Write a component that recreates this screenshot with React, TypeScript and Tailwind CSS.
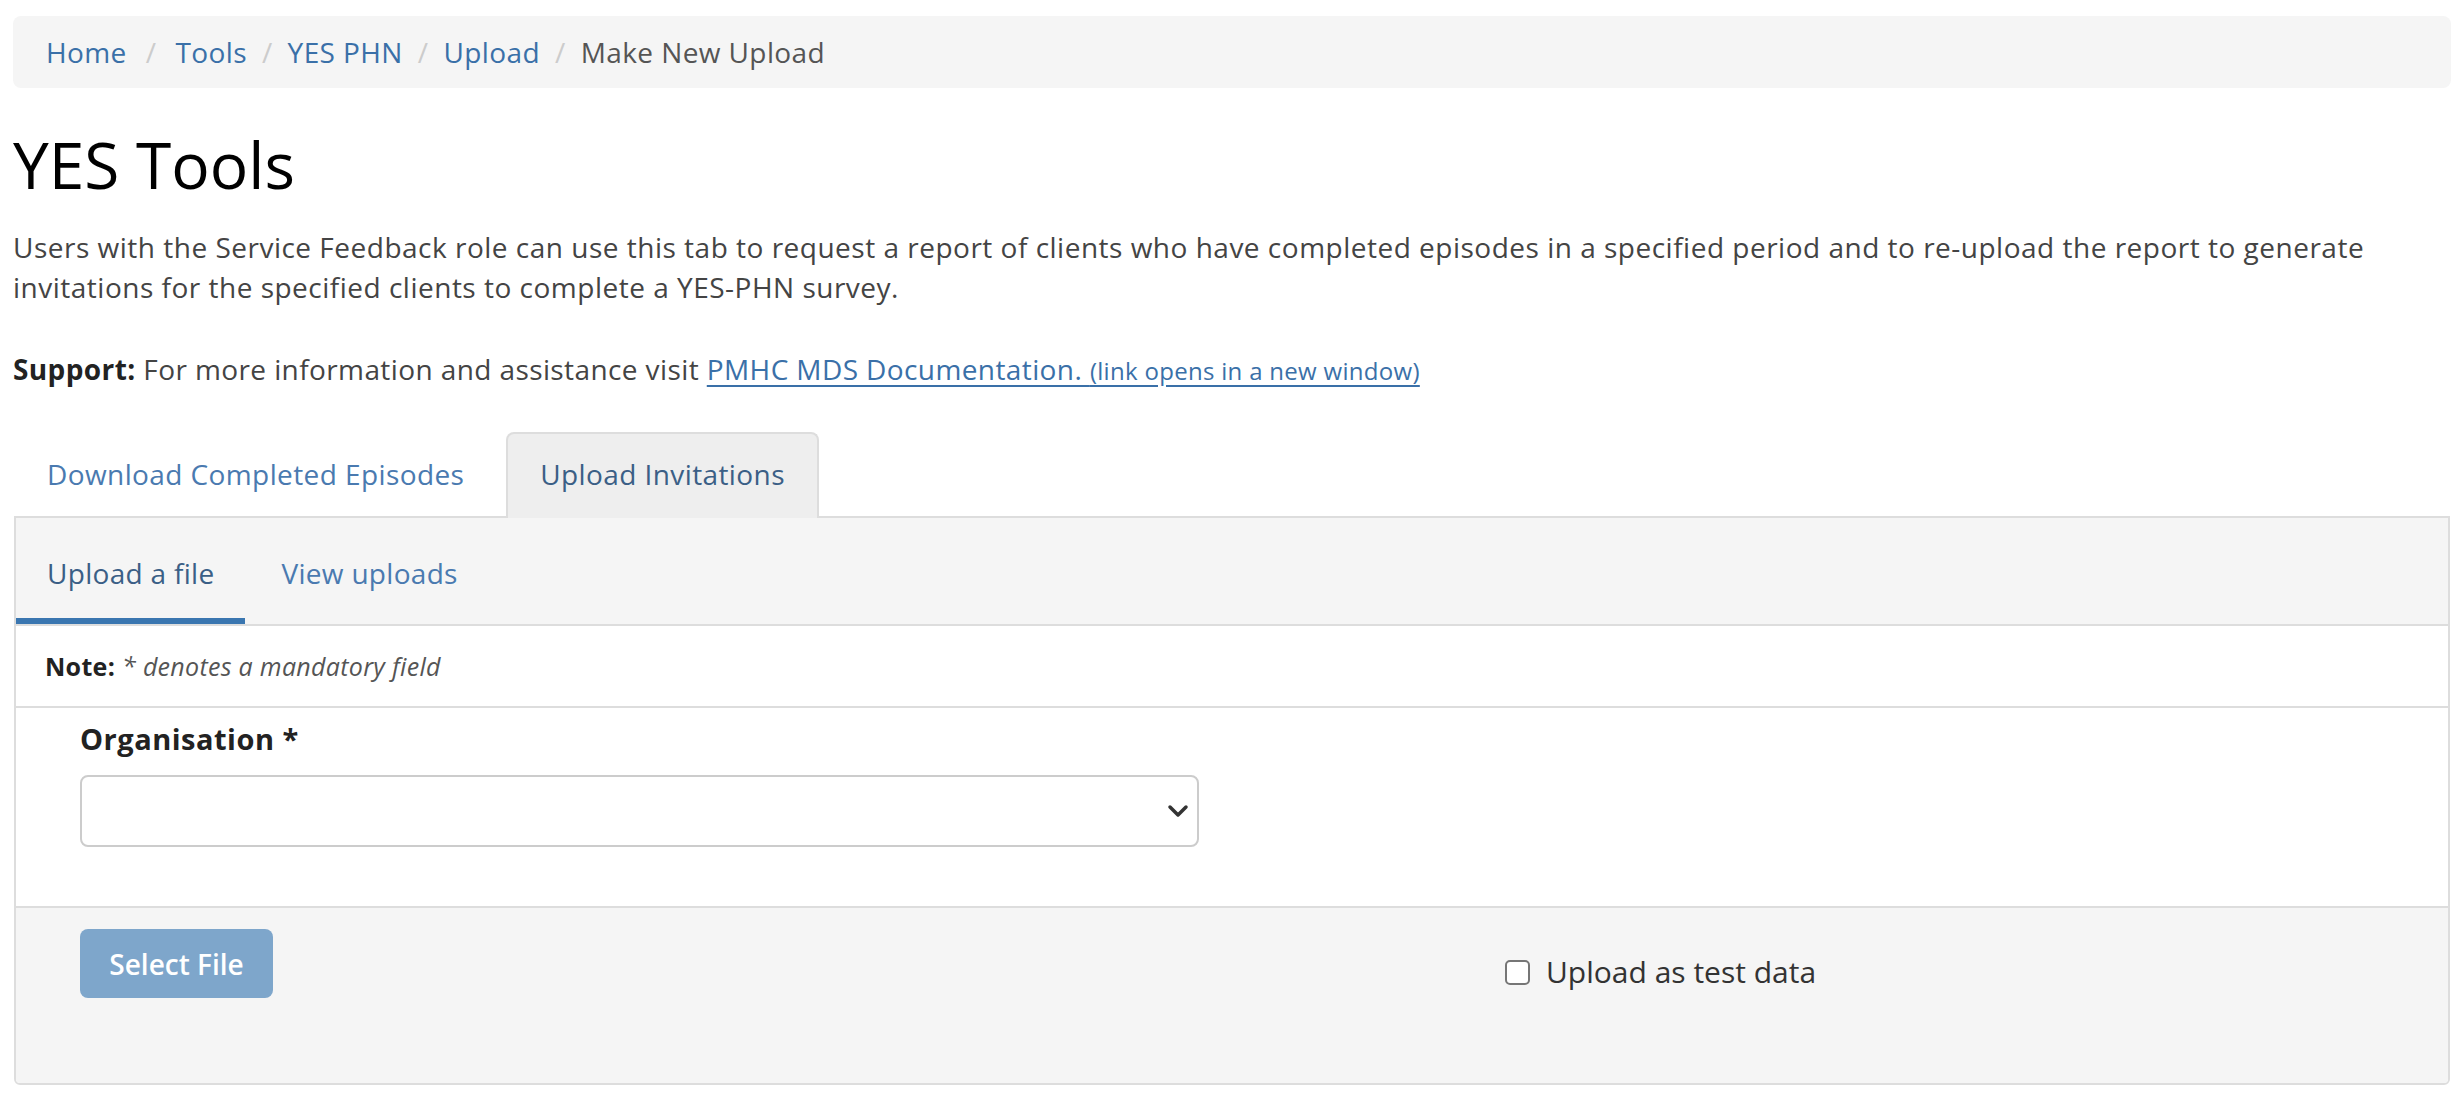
export default function App() {
  const crumbs = ['Home', 'Tools', 'YES PHN', 'Upload'];

  return (
    <div className="min-h-screen bg-white font-['Open_Sans',sans-serif] text-[28px] leading-[40px] text-[#333] px-[13px] pt-[16px]">
      <nav className="flex h-[72px] items-center rounded-lg bg-[#f5f5f5] px-[33px] tracking-[0.4px]">
        {crumbs.map((c, i) => (
          <span key={c} className="flex items-center">
            <a href="#" className="text-[#3a70a8]">{c}</a>
            <span className={i === 0 ? 'px-[19px] text-[#ccc]' : 'px-[15px] text-[#ccc]'}>/</span>
          </span>
        ))}
        <span className="text-[#555]">Make New Upload</span>
      </nav>

      <h1 className="mt-[42px] text-[64px] leading-[70px] font-normal text-black">YES Tools</h1>

      <p className="mt-[27px] text-[28px] leading-[40px] tracking-[0.5px] text-[#444]">
        Users with the Service Feedback role can use this tab to request a report of clients who have completed episodes in a specified period and to re-upload the report to generate invitations for the specified clients to complete a YES-PHN survey.
      </p>

      <p className="mt-[42px] tracking-[0.4px] text-[#444]">
        <strong className="font-bold text-[#222]">Support:</strong> For more information and assistance visit{' '}
        <a href="#" className="text-[#3a70a8] underline underline-offset-[5px]">
          PMHC MDS Documentation. <span className="text-[24px] tracking-[0.3px]">(link opens in a new window)</span>
        </a>
      </p>

      <div className="mt-[41px] flex tracking-[0.4px]">
        <div className="mr-[8px] border-2 border-transparent px-[32px] pt-[20px] pb-[20px] text-[#4a7ab0]">
          Download Completed Episodes
        </div>
        <div className="relative z-10 -mb-[2px] rounded-t-lg border-2 border-b-0 border-[#ddd] bg-[#eee] px-[32px] pt-[20px] pb-[22px] text-[#3b5f86]">
          Upload Invitations
        </div>
      </div>

      <div className="mx-px overflow-hidden rounded-b-md border-2 border-[#ddd]">
        <div className="flex gap-[5px] border-b-2 border-[#ddd] bg-[#f5f5f5] tracking-[0.3px]">
          <div className="border-b-[6px] border-[#3a76b0] px-[31px] pt-[35px] pb-[25px] text-[#3b5f86]">
            Upload a file
          </div>
          <div className="border-b-[6px] border-transparent px-[31px] pt-[35px] pb-[25px] text-[#4a7ab0]">
            View uploads
          </div>
        </div>

        <div className="flex h-[82px] items-center border-b-2 border-[#ddd] bg-white px-[29px] text-[25px] tracking-[0.3px]">
          <span className="font-bold text-[#222]">Note:</span>
          <span className="ml-[7px] italic text-[#555]">* denotes a mandatory field</span>
        </div>

        <div className="border-b-2 border-[#ddd] bg-white px-[64px] pt-[11px] pb-[59px]">
          <label className="block text-[29px] font-bold tracking-[0.5px] text-[#222]">Organisation *</label>
          <div className="mt-[16px] flex h-[72px] w-[1119px] items-center justify-end rounded-lg border-2 border-[#ccc] bg-white pr-[8px]">
            <svg width="22" height="14" viewBox="0 0 22 14" fill="none">
              <polyline points="3,3 11,11 19,3" stroke="#333" strokeWidth="3.5" strokeLinecap="round" strokeLinejoin="round" />
            </svg>
          </div>
        </div>

        <div className="flex h-[175px] items-start bg-[#f5f5f5] px-[64px] pt-[21px]">
          <button className="h-[69px] w-[193px] rounded-lg bg-[#7ea6cb] font-semibold text-white">
            Select File
          </button>
          <label className="ml-[1232px] mt-[23px] flex items-center gap-[16px] text-[30px] text-[#333]">
            <span className="h-[25px] w-[25px] rounded-[5px] border-2 border-[#767676] bg-white" />
            Upload as test data
          </label>
        </div>
      </div>
    </div>
  );
}
